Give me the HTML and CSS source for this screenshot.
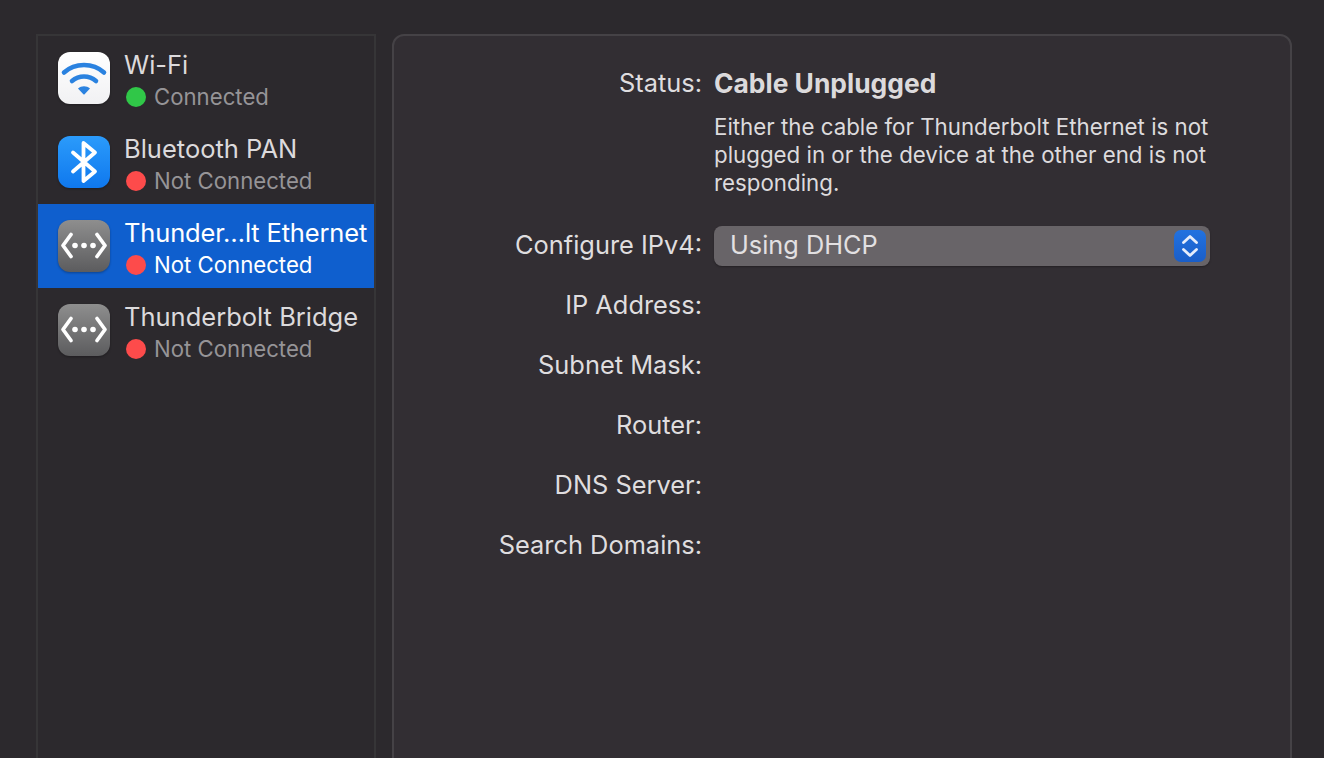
FILE: index.html
```html
<!DOCTYPE html>
<html lang="en">
<head>
<meta charset="utf-8">
<title>Network</title>
<link rel="stylesheet" href="styles.css">
</head>
<body>
<div class="window">
  <aside class="sidebar">
    <div class="row">
      <svg class="icon" viewBox="0 0 52 52"><defs><linearGradient id="w" x1="0" y1="0" x2="0" y2="1"><stop offset="0" stop-color="#ffffff"/><stop offset="1" stop-color="#f1f1f3"/></linearGradient></defs><rect width="52" height="52" rx="12" fill="url(#w)"/><path d="M6 20.5C17 10.5 35 10.5 46 20.5" fill="none" stroke="#2a82e0" stroke-width="4.6" stroke-linecap="round"/><path d="M14 29C21 23 31 23 38 29" fill="none" stroke="#2a82e0" stroke-width="4.6" stroke-linecap="round"/><path d="M20 36.5C23.5 33.4 28.5 33.4 32 36.5L26.6 42.2Q26 42.8 25.4 42.2Z" fill="#2a82e0"/></svg>
      <div class="info">
        <div class="name">Wi-Fi</div>
        <div class="state"><span class="dot green"></span>Connected</div>
      </div>
    </div>
    <div class="row">
      <svg class="icon" viewBox="0 0 52 52"><defs><linearGradient id="b" x1="0" y1="0" x2="0" y2="1"><stop offset="0" stop-color="#2b9bfb"/><stop offset="1" stop-color="#0f78ee"/></linearGradient></defs><rect width="52" height="52" rx="12" fill="url(#b)"/><path d="M15 16.5L37 35.5L25.5 45V7L37 16.5L15 35.5" fill="none" stroke="#fff" stroke-width="3.8" stroke-linecap="round" stroke-linejoin="round"/></svg>
      <div class="info">
        <div class="name">Bluetooth PAN</div>
        <div class="state"><span class="dot red"></span>Not Connected</div>
      </div>
    </div>
    <div class="row selected">
      <svg class="icon" viewBox="0 0 52 52"><defs><linearGradient id="e" x1="0" y1="0" x2="0" y2="1"><stop offset="0" stop-color="#8e8e8e"/><stop offset="1" stop-color="#5c5c5e"/></linearGradient></defs><rect width="52" height="52" rx="12" fill="url(#e)"/><path d="M13 14.5L5 25.5L13 36.5M39 14.5L47 25.5L39 36.5" fill="none" stroke="#fff" stroke-width="3.7" stroke-linecap="round" stroke-linejoin="round"/><circle cx="17" cy="25.5" r="2.8" fill="#fff"/><circle cx="26" cy="25.5" r="2.8" fill="#fff"/><circle cx="35" cy="25.5" r="2.8" fill="#fff"/></svg>
      <div class="info">
        <div class="name truncated">Thunder…lt Ethernet</div>
        <div class="state"><span class="dot red"></span>Not Connected</div>
      </div>
    </div>
    <div class="row">
      <svg class="icon" viewBox="0 0 52 52"><rect width="52" height="52" rx="12" fill="url(#e)"/><path d="M13 14.5L5 25.5L13 36.5M39 14.5L47 25.5L39 36.5" fill="none" stroke="#fff" stroke-width="3.7" stroke-linecap="round" stroke-linejoin="round"/><circle cx="17" cy="25.5" r="2.8" fill="#fff"/><circle cx="26" cy="25.5" r="2.8" fill="#fff"/><circle cx="35" cy="25.5" r="2.8" fill="#fff"/></svg>
      <div class="info">
        <div class="name">Thunderbolt Bridge</div>
        <div class="state"><span class="dot red"></span>Not Connected</div>
      </div>
    </div>
  </aside>
  <main class="panel">
    <div class="form">
      <div class="label status-row">Status:</div>
      <div class="value status-row strong">Cable Unplugged</div>
      <div></div>
      <p class="desc">Either the cable for Thunderbolt Ethernet is not plugged in or the device at the other end is not responding.</p>
      <div class="label config">Configure IPv4:</div>
      <div class="select config">
        <span>Using DHCP</span>
        <span class="stepper"><svg viewBox="0 0 32 32" width="32" height="32"><path d="M9.5 12.5L16 6.5L22.5 12.5M9.5 19.5L16 25.5L22.5 19.5" fill="none" stroke="#e6edfb" stroke-width="2.8" stroke-linecap="round" stroke-linejoin="round"/></svg></span>
      </div>
      <div class="label field first">IP Address:</div><div class="field first"></div>
      <div class="label field">Subnet Mask:</div><div class="field"></div>
      <div class="label field">Router:</div><div class="field"></div>
      <div class="label field">DNS Server:</div><div class="field"></div>
      <div class="label field">Search Domains:</div><div class="field"></div>
    </div>
  </main>
</div>
</body>
</html>
```
FILE: styles.css
```css
* { box-sizing: border-box; }
html, body { margin: 0; height: 100%; overflow: hidden; }
body {
  background: #2c292d;
  font-family: Inter, "Liberation Sans", sans-serif;
  font-size: 25.4px;
  color: #dfdddf;
}
.window {
  display: flex;
  gap: 16px;
  padding: 34px 32px 0 36px;
  height: 100vh;
  overflow: hidden;
}
.sidebar {
  width: 340px;
  height: 800px;
  flex: none;
  border: 2px solid #363537;
  background: #2c292d;
}
.row {
  height: 84px;
  display: flex;
  align-items: center;
  padding-left: 20px;
  gap: 14px;
}
.row.selected { background: #0f5fce; color: #fff; }
.icon { width: 52px; height: 52px; flex: none; filter: drop-shadow(0 1px 1px rgba(0,0,0,.3)); }
.info { display: flex; flex-direction: column; white-space: nowrap; padding-top: 6px; }
.name { height: 28px; line-height: 28px; font-size: 25.5px; color: #dcdadc; }
.name.truncated { letter-spacing: -0.16px; }
.selected .name { color: #fff; }
.state {
  display: flex;
  align-items: center;
  height: 28px;
  line-height: 28px;
  margin-top: 4px;
  font-size: 22.2px;
  color: #969497;
  gap: 8px;
  padding-left: 2px;
}
.selected .state { color: #fff; }
.dot { width: 20px; height: 20px; border-radius: 50%; flex: none; }
.dot.green { background: #30c748; }
.dot.red { background: #fd4b4b; }
.panel {
  flex: 1;
  height: 800px;
  border: 2px solid #454246;
  border-radius: 12px;
  background: #322e33;
}
.form {
  display: grid;
  grid-template-columns: 308px 496px;
  column-gap: 12px;
  align-items: center;
  align-content: start;
  padding-top: 31px;
}
.label { text-align: right; }
.status-row { height: 32px; line-height: 32px; }
.strong { font-weight: 700; font-size: 26.4px; color: #dcdadc; }
.desc {
  margin: 13.5px 0 0;
  line-height: 28px;
  font-size: 22.3px;
  color: #dddbdd;
}
.config { margin-top: 29.5px; }
.label.config { height: 40px; line-height: 38px; }
.select {
  height: 40px;
  display: flex;
  align-items: center;
  justify-content: space-between;
  padding: 0 4px 0 16px;
  border-radius: 8px;
  background: #686468;
  font-size: 25.3px;
  color: #e2e0e2;
  box-shadow: 0 1px 2px rgba(0,0,0,.3);
}
.select > span:first-child { padding-bottom: 3px; }
.stepper {
  width: 32px;
  height: 32px;
  border-radius: 7px;
  background: linear-gradient(#2272e0, #1a5ec8);
  display: block;
}
.stepper svg { display: block; }
.field { height: 60px; line-height: 60px; }
.field.first { margin-top: 9px; }
```
